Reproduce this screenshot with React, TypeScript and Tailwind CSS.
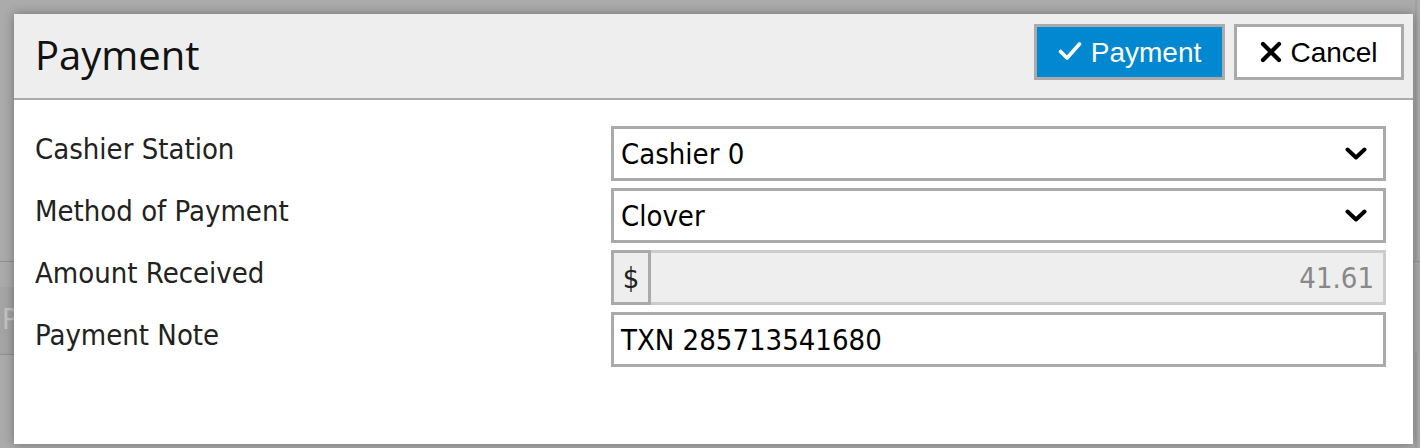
import React from "react";

const labelFont = { fontFamily: '"DejaVu Sans Condensed", "DejaVu Sans", Verdana, sans-serif' } as React.CSSProperties;

function Chevron() {
  return (
    <svg width="22" height="14" viewBox="0 0 22 14" className="shrink-0">
      <polyline points="2.5,2.5 11,10.5 19.5,2.5" fill="none" stroke="#000" strokeWidth="4" strokeLinecap="round" strokeLinejoin="round" />
    </svg>
  );
}

function Row({ label, children }: { label: string; children: React.ReactNode }) {
  return (
    <div className="flex h-[55px]">
      <div className="w-[576px] shrink-0 pt-[6px] text-[29px] leading-[34px] text-[#222]">{label}</div>
      <div className="flex-1">{children}</div>
    </div>
  );
}

export default function App() {
  return (
    <div className="relative w-[1420px] h-[448px] overflow-hidden bg-[#ababab]" style={labelFont}>
      {/* background page hints */}
      <div className="absolute left-0 top-[261px] w-[20px] h-[1px] bg-[#8f8f8f]" />
      <div className="absolute left-0 top-[287px] w-[20px] h-[68px] bg-[#a4a4a4] border-b border-[#8f8f8f]" />
      <div className="absolute left-[2px] top-[302px] text-[29px] leading-[34px] text-[#c4c4c4]">P</div>
      <div className="absolute right-0 top-[261px] w-[10px] h-[1px] bg-[#8f8f8f]" />
      <div className="absolute left-[1415px] top-0 w-[2px] h-[262px] bg-[#a0a0a0]" />
      <div className="absolute left-[1415px] top-[353px] w-[2px] h-[95px] bg-[#a0a0a0]" />

      <div className="relative ml-[14px] mt-[14px] w-[1399px] h-[430px] bg-white shadow-[0_0_10px_rgba(0,0,0,0.35)] flex flex-col">
        {/* header */}
        <div className="h-[86px] shrink-0 bg-[#eeeeee] border-b-2 border-[#aaaaaa] flex items-start justify-between pl-[21px] pr-[9px]">
          <div className="mt-[15px] text-[40px] leading-[52px] text-[#111]" style={{ fontFamily: '"Open Sans", "Noto Sans", sans-serif' }}>
            Payment
          </div>
          <div className="flex gap-[9px] mt-[10px]" style={{ fontFamily: '"Liberation Sans", Arial, sans-serif' }}>
            <div className="w-[191px] h-[56px] border-[3px] border-[#aaaaaa] bg-[#0288d1] text-white flex items-center justify-center gap-[9px] text-[28px]">
              <svg width="24" height="20" viewBox="0 0 24 20" className="-mt-[2px]">
                <polyline points="2.5,10.5 9,17 21.5,3" fill="none" stroke="#fff" strokeWidth="3.6" strokeLinecap="round" strokeLinejoin="round" />
              </svg>
              <span className="leading-[30px] mt-[2px]">Payment</span>
            </div>
            <div className="w-[170px] h-[56px] border-[3px] border-[#aaaaaa] bg-white text-black flex items-center justify-center gap-[8px] text-[28px]">
              <svg width="22" height="22" viewBox="0 0 22 22" className="-mt-[1px]">
                <path d="M3 3 L19 19 M19 3 L3 19" fill="none" stroke="#000" strokeWidth="4.2" strokeLinecap="round" />
              </svg>
              <span className="leading-[30px] mt-[2px]">Cancel</span>
            </div>
          </div>
        </div>

        {/* body */}
        <div className="flex flex-col gap-[7px] pt-[26px] pl-[21px] pr-[27px]">
          <Row label="Cashier Station">
            <div className="h-[55px] border-[3px] border-[#aaaaaa] bg-white flex items-center justify-between pl-[7px] pr-[16px] text-[29px] text-black">
              <span className="mt-[3px]">Cashier 0</span>
              <Chevron />
            </div>
          </Row>
          <Row label="Method of Payment">
            <div className="h-[55px] border-[3px] border-[#aaaaaa] bg-white flex items-center justify-between pl-[7px] pr-[16px] text-[29px] text-black">
              <span className="mt-[3px]">Clover</span>
              <Chevron />
            </div>
          </Row>
          <Row label="Amount Received">
            <div className="h-[55px] flex">
              <div className="w-[40px] h-[55px] border-[3px] border-[#aaaaaa] bg-[#eeeeee] flex items-center justify-center text-[29px] text-[#222]">
                <span className="mt-[3px]">$</span>
              </div>
              <div className="flex-1 h-[55px] border-[3px] border-l-0 border-[#cccccc] bg-[#eeeeee] flex items-center justify-end pr-[9px] text-[29px] text-[#888]">
                <span className="mt-[3px]">41.61</span>
              </div>
            </div>
          </Row>
          <Row label="Payment Note">
            <div className="h-[55px] border-[3px] border-[#aaaaaa] bg-white flex items-center pl-[7px] text-[29px] text-black">
              <span className="mt-[3px]">TXN 285713541680</span>
            </div>
          </Row>
        </div>
      </div>
    </div>
  );
}
